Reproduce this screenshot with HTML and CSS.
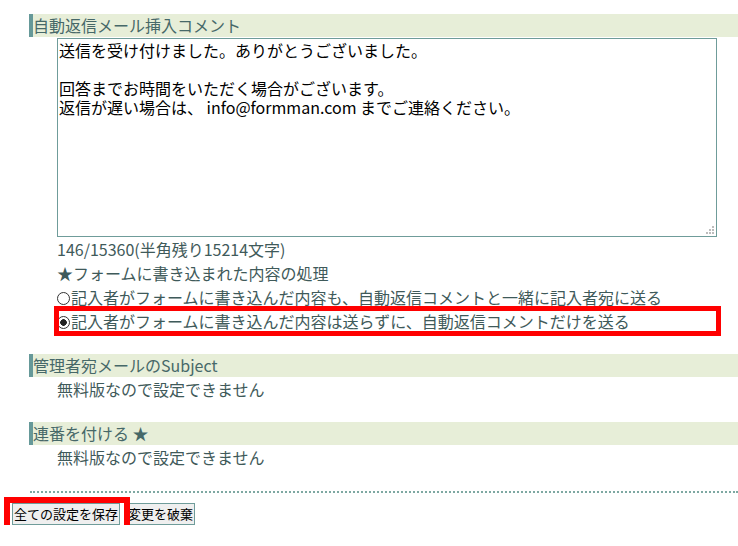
FILE: index.html
```html
<!DOCTYPE html>
<html lang="ja">
<head>
<meta charset="utf-8">
<title>自動返信設定</title>
<link rel="stylesheet" href="styles.css">
</head>
<body>
<div class="page">
  <section class="item">
    <h3 class="item-head">自動返信メール挿入コメント</h3>
    <div class="item-body">
      <div class="field">
        <textarea class="comment">送信を受け付けました。ありがとうございました。

回答までお時間をいただく場合がございます。
返信が遅い場合は、 info@formman.com までご連絡ください。</textarea>
        <span class="grip"></span>
      </div>
      <p class="line">146/15360(半角残り15214文字)</p>
      <p class="line">★フォームに書き込まれた内容の処理</p>
      <label class="line"><input type="radio" name="mode" class="radio">記入者がフォームに書き込んだ内容も、自動返信コメントと一緒に記入者宛に送る</label>
      <label class="line marked"><input type="radio" name="mode" class="radio" checked>記入者がフォームに書き込んだ内容は送らずに、自動返信コメントだけを送る<span class="annot annot-line"></span></label>
    </div>
  </section>

  <section class="item">
    <h3 class="item-head">管理者宛メールのSubject</h3>
    <div class="item-body">
      <p class="line">無料版なので設定できません</p>
    </div>
  </section>

  <section class="item">
    <h3 class="item-head">連番を付ける ★</h3>
    <div class="item-body">
      <p class="line">無料版なので設定できません</p>
    </div>
  </section>

  <hr class="divider">

  <div class="actions">
    <span class="btn-wrap"><button class="btn" type="button">全ての設定を保存</button><span class="annot annot-btn"></span></span>
    <button class="btn" type="button">変更を破棄</button>
  </div>
</div>
</body>
</html>
```

FILE: styles.css
```css
* {
  box-sizing: border-box;
}

html, body {
  margin: 0;
  padding: 0;
  background: #ffffff;
}

body {
  font-family: "Noto Sans CJK JP", "Noto Sans", sans-serif;
  font-size: 16px;
  color: #3f5a5a;
}

.page {
  padding-top: 14px;
}

.item {
  margin-left: 29px;
}

.item + .item {
  margin-top: 21px;
}

.item-head {
  margin: 0;
  height: 23px;
  line-height: 23px;
  font-size: 16px;
  font-weight: normal;
  color: #466868;
  background: #e7eed8;
  border-left: 4px solid #669999;
  white-space: nowrap;
}

.item-body {
  padding-left: 28px;
}

.field {
  position: relative;
  width: 660px;
  margin-top: 1px;
}

.comment {
  display: block;
  width: 660px;
  height: 199px;
  margin: 0;
  padding: 2px 1px;
  border: 1px solid #6f9c9a;
  border-radius: 0;
  font-family: "Noto Sans CJK JP", sans-serif;
  font-size: 16px;
  line-height: 19px;
  color: #000000;
  background: #ffffff;
  resize: none;
  outline: none;
}

.grip {
  position: absolute;
  right: 3px;
  bottom: 3px;
  width: 2px;
  height: 2px;
  background: #bdbdbd;
  box-shadow: -3px 0 0 #bdbdbd, -6px 0 0 #bdbdbd, 0 -3px 0 #bdbdbd, -3px -3px 0 #bdbdbd, 0 -6px 0 #bdbdbd;
  pointer-events: none;
}

.line {
  display: block;
  margin: 0;
  height: 24px;
  line-height: 24px;
  white-space: nowrap;
}

.marked {
  position: relative;
}

.radio {
  -webkit-appearance: none;
  appearance: none;
  width: 13px;
  height: 13px;
  margin: 0 1px 0 0;
  border: 1px solid #333333;
  border-radius: 50%;
  background: #ffffff;
  vertical-align: -1px;
}

.radio:checked {
  background: radial-gradient(circle, #222222 0 3px, #ffffff 3.6px);
}

.annot {
  position: absolute;
  border: 5px solid #ff0000;
  pointer-events: none;
}

.annot-line {
  left: -3px;
  top: -3px;
  width: 667px;
  height: 30px;
}

.divider {
  margin: 22px 0 0 30px;
  height: 0;
  border: 0;
  border-top: 2px dotted #7ea8a2;
}

.actions {
  display: flex;
  gap: 6px;
  margin-top: 10px;
  padding-left: 12px;
}

.btn-wrap {
  position: relative;
  display: block;
}

.btn {
  display: block;
  height: 22px;
  margin: 0;
  padding: 0 1px;
  font-family: "Noto Sans CJK JP", sans-serif;
  font-size: 13px;
  line-height: 20px;
  color: #000000;
  background: #efefef;
  border: 1px solid #6f9c9a;
  border-radius: 0;
}

.annot-btn {
  left: -8px;
  top: -6px;
  width: 126px;
  height: 35px;
  border-width: 6px;
}
```
